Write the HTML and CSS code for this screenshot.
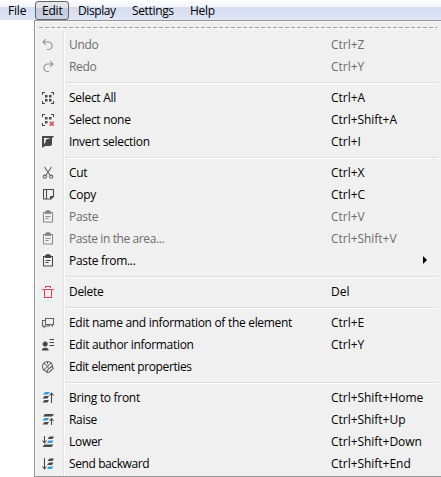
FILE: index.html
```
<!DOCTYPE html>
<html lang="en">
<head>
<meta charset="utf-8">
<title>Edit menu</title>
<link rel="stylesheet" href="styles.css">
</head>
<body>
<nav class="menubar">
<span class="file">File</span><span class="edit active">Edit</span><span class="display">Display</span><span class="settings">Settings</span><span class="help">Help</span>
</nav>
<main class="menu">
<div class="tear"></div>
<div class="items">
<div class="row off"><svg viewBox="0 0 14 14"><path d="M5 1 2 4 5 7M2 4H8A3.8 3.8 0 1 1 6 11.3"/></svg><span>Undo</span><kbd>Ctrl+Z</kbd></div>
<div class="row off"><svg viewBox="0 0 14 14"><path d="M9 1 12 4 9 7M12 4H6A3.8 3.8 0 1 0 8 11.3"/></svg><span>Redo</span><kbd>Ctrl+Y</kbd></div>
<hr>
<div class="row"><svg viewBox="0 0 14 14"><path d="M1.5 4V1.5H4M10 1.5H12.5V4M12.5 10V12.5H10M4 12.5H1.5V10"/><path class="fill" d="M4 4h2.5v2.5H4zM8 4h2.5v2.5H8zM4 8h2.5v2.5H4zM8 8h2.5v2.5H8z"/></svg><span>Select All</span><kbd>Ctrl+A</kbd></div>
<div class="row"><svg viewBox="0 0 14 14"><path d="M1.5 4V1.5H4M10 1.5H12.5V4M4 12.5H1.5V10M4.5 4.5h1.5v1.5H4.5zM8.5 4.5h1.5v1.5H8.5zM4.5 8.5h1.5v1.5H4.5z"/><path class="red thick" d="m8.7 8.7 4 4m0-4-4 4"/></svg><span>Select none</span><kbd>Ctrl+Shift+A</kbd></div>
<div class="row"><svg viewBox="0 0 14 14"><path class="fill" fill-rule="evenodd" d="M1 1H13L11 3.200V10L9 11H4L1 13zM3 3V9L4.500 7.500Q4 4 8 3.800L9 3z"/><path class="fill" d="M4.500 10Q4 7 6 5.500T10.500 3.500Q11 7 9 8.500T4.500 10z"/></svg><span>Invert selection</span><kbd>Ctrl+I</kbd></div>
<hr>
<div class="row soft"><svg viewBox="0 0 14 14"><path d="M3.5 1 9.2 9.500M10.500 1 4.800 9.500"/><circle cx="3.800" cy="10.700" r="1.600"/><circle cx="10.200" cy="10.700" r="1.600"/></svg><span>Cut</span><kbd>Ctrl+X</kbd></div>
<div class="row"><svg viewBox="0 0 14 14"><path d="M5.5 1.5h7v7l-2.5 2.5H5.5zM5.500 1.500H2.500v9.500h3"/><path class="fill" d="M9 11.500V8h4z"/></svg><span>Copy</span><kbd>Ctrl+C</kbd></div>
<div class="row off"><svg viewBox="0 0 14 14"><path d="M2.500 2.500h9v9.500h-9zM4.500 6.500h5M4.500 8.500h3"/><path class="fill" d="M4 1h1.500V0H8.500v1h1.500v3H4z"/></svg><span>Paste</span><kbd>Ctrl+V</kbd></div>
<div class="row off"><svg viewBox="0 0 14 14"><path d="M2.500 2.500h9v9.500h-9zM4.500 6.500h5M4.500 8.500h3"/><path class="fill" d="M4 1h1.500V0H8.500v1h1.500v3H4z"/></svg><span class="tight">Paste in the area...</span><kbd>Ctrl+Shift+V</kbd></div>
<div class="row"><svg viewBox="0 0 14 14"><path d="M2.500 2.500h9v9.500h-9zM4.500 6.500h5M4.500 8.500h3"/><path class="fill" d="M4 1h1.500V0H8.500v1h1.500v3H4z"/></svg><span>Paste from...</span><i class="arrow"></i></div>
<hr>
<div class="row"><svg viewBox="0 0 14 14"><path class="red" d="M1 4.5h12M4.5 3V1.5h5V3M3.5 4.5v8h7v-8"/></svg><span>Delete</span><kbd>Del</kbd></div>
<hr>
<div class="row soft"><svg viewBox="0 0 14 14"><path d="M4.500 2.500h8v6h-1v1.500l-1.500-1.500H4.500zM4.500 4.500H1.500v5.500h1.500v1.500l1.500-1.500h4V8.500"/></svg><span>Edit name and information of the element</span><kbd>Ctrl+E</kbd></div>
<div class="row"><svg viewBox="0 0 14 14"><circle class="fill" cx="4.200" cy="6" r="2.500"/><path class="fill" d="M1 12.500V11q3.200-3 6.500 0v1.500z"/><path d="M8.500 1.500h4.500M8.500 4.500H13M8.500 7.500H13"/></svg><span>Edit author information</span><kbd>Ctrl+Y</kbd></div>
<div class="row soft"><svg viewBox="0 0 14 14"><circle cx="6.5" cy="6.500" r="5"/><path d="m3 3 4.500 4.500M10 3l-7 7M6.500 1.500V4"/><path class="pencil" d="m6 12.5.5-2.5L10.500 6.500l1.800 1.800-3.800 3.700z"/></svg><span class="tight">Edit element properties</span></div>
<hr>
<div class="row"><svg viewBox="0 0 14 14"><path class="blue" d="M4 1h5L7 3.500H2z"/><path class="fill" d="M3.500 5h4.500L6.500 7.500H1.500zM3.500 9h4.500L6.500 11.500H1.500z"/><path d="M10.500 12V2M8.500 4.500l2-2.500 2 2.500"/></svg><span>Bring to front</span><kbd>Ctrl+Shift+Home</kbd></div>
<div class="row"><svg viewBox="0 0 14 14"><path class="blue" d="M3.500 5h4.500L6.500 7.500H1.500z"/><path class="fill" d="M4 1h9l-2 2.500H2zM3.500 9h4.500L6.500 11.500H1.500z"/><path d="M10.500 12V5.500M8.500 8l2-2.500 2 2.500"/></svg><span>Raise</span><kbd>Ctrl+Shift+Up</kbd></div>
<div class="row"><svg viewBox="0 0 14 14"><path class="blue" d="M7.500 5.500h5L11 8H6z"/><path class="fill" d="M8.500 1.500h4.500L11.500 4H6.500zM3.500 9.500h9l-2 2.500H1.500z"/><path d="M3.500 1v7M1.500 5.500l2 2.500 2-2.500"/></svg><span>Lower</span><kbd>Ctrl+Shift+Down</kbd></div>
<div class="row"><svg viewBox="0 0 14 14"><path class="blue" d="M7.500 9.500h5L10.500 12H6z"/><path class="fill" d="M8.500 1.500h4.500L11.500 4H6.500zM8 5.500h4.500L11 8H6z"/><path d="M3.500 1v11M1.500 9.500l2 2.500 2-2.500"/></svg><span class="tight">Send backward</span><kbd>Ctrl+Shift+End</kbd></div>
</div>
</main>
</body>
</html>
```
FILE: styles.css
```
* { box-sizing: border-box; }
body { margin: 0; width: 441px; height: 477px; overflow: hidden; background: #fff; color: #000; font: 12px/20px "Open Sans", "Noto Sans", sans-serif; }
.menubar { display: flex; height: 20px; background: linear-gradient(#fff 0, #f3f5fb 7px, #d5dcef 7px, #dfe6f6 20px); white-space: nowrap; line-height: 21px; }
.menubar span { flex: none; }
.file { width: 35px; padding-left: 8px; letter-spacing: -.2px; }
.edit { width: 34px; padding-left: 6px; letter-spacing: -.2px; }
.active { height: 19px; margin-top: 1px; line-height: 17px; border: 1px solid #646464; border-radius: 3px; background: linear-gradient(#e6e8ee 0, #dcdfe7 6px, #c2c8d9 6px, #ccd3e3); }
.display { width: 63px; padding-left: 9px; letter-spacing: -.4px; }
.settings { width: 58px; letter-spacing: -.35px; }
.help { letter-spacing: -.25px; }
.menu { margin-left: 34px; width: 407px; height: 457px; background: #f0f0f0; border: 1px solid #979797; border-right: 0; box-shadow: inset 1px 1px #f8f8f8; padding: 6px 3px 0; }
.tear { height: 2px; margin: 0 1px; background: repeating-linear-gradient(90deg, #a0a0a0 0 4px, transparent 4px 6px) 0 0 / 100% 1px no-repeat, linear-gradient(#fff, #fff) 0 1px / 100% 1px no-repeat; }
.items { margin-top: 4px; padding-top: 1px; background: linear-gradient(90deg, transparent 25px, #e2e2e2 25px 26px, #fff 26px 27px, transparent 27px); }
.row { height: 22px; display: grid; grid-template-columns: 31px 262px 92px 1fr; align-items: center; line-height: 22px; white-space: nowrap; letter-spacing: -.3px; }
.row kbd { font: inherit; letter-spacing: -.03px; }
.tight { letter-spacing: -.4px; }
.off { color: #6d6d6d; }
svg { width: 14px; height: 14px; margin-left: 3px; color: #484848; fill: none; stroke: currentColor; stroke-width: 1.05; overflow: visible; }
.soft svg { color: #606060; }
.off svg { color: #8c8c8c; }
.fill { fill: currentColor; stroke: none; }
.red { stroke: #dc4354; }
.thick { stroke-width: 1.6; }
.pencil { fill: #f0f0f0; }
.blue { fill: #319fda; stroke: none; }
hr { height: 9px; border: 0; margin: 0 0 0 27px; background: linear-gradient(#dedede, #dedede) 0 4px / 100% 1px no-repeat, linear-gradient(#fff, #fff) 0 5px / 100% 1px no-repeat; }
.arrow { width: 0; height: 0; border: 4px solid transparent; border-left: 4px solid #000; border-right: 0; margin: -2px 0 0 92px; }
```
